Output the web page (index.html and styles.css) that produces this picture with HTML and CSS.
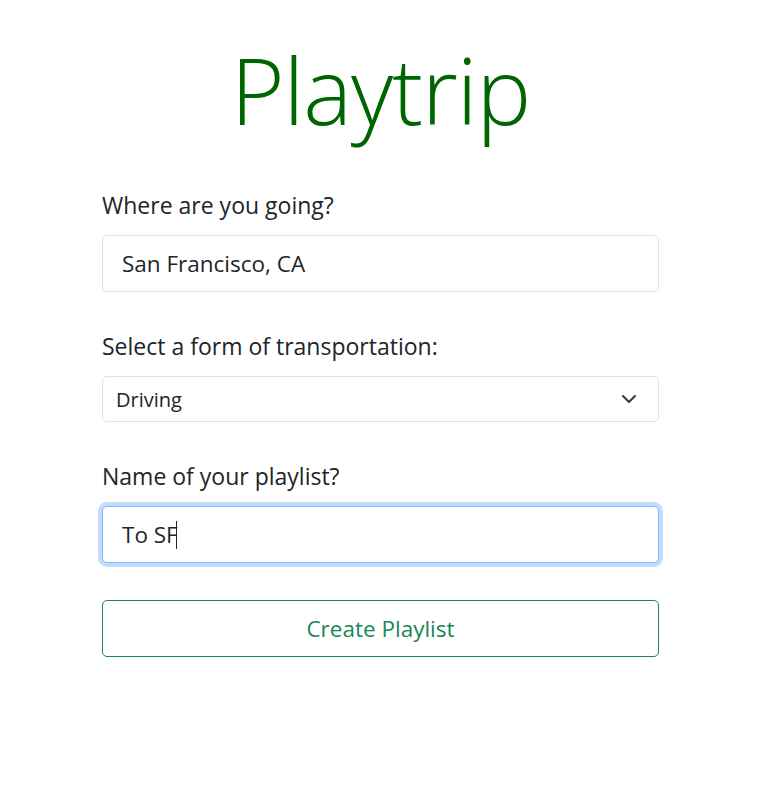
FILE: index.html
```html
<!DOCTYPE html>
<html lang="en">
<head>
<meta charset="utf-8">
<title>Playtrip</title>
<link rel="stylesheet" href="styles.css">
</head>
<body>
<main class="page">
  <h1 class="title">Playtrip</h1>
  <form class="form">
    <div class="field">
      <label class="label" for="dest">Where are you going?</label>
      <input class="input" id="dest" type="text" value="San Francisco, CA">
    </div>
    <div class="field">
      <label class="label" for="mode">Select a form of transportation:</label>
      <div class="select">
        <span class="select-value">Driving</span>
        <svg class="chevron" viewBox="0 0 16 16" width="16" height="16"><path d="M2 5l6 6 6-6" fill="none" stroke="#343a40" stroke-width="2" stroke-linecap="round" stroke-linejoin="round"/></svg>
      </div>
    </div>
    <div class="field">
      <label class="label" for="name">Name of your playlist?</label>
      <div class="input focus"><span>To SF</span><span class="caret"></span></div>
    </div>
    <button type="button" class="btn">Create Playlist</button>
  </form>
</main>
</body>
</html>
```
FILE: styles.css
```css
* { box-sizing: border-box; }
html, body { margin: 0; padding: 0; background: #fff; }
body {
  font-family: "Open Sans", "Noto Sans", sans-serif;
  color: #212529;
}
.page {
  width: 557px;
  margin: 0 auto;
  display: flex;
  flex-direction: column;
  padding-top: 30px;
}
.title {
  margin: 0;
  text-align: center;
  font-weight: 300;
  font-size: 92px;
  line-height: 120px;
  color: #006400;
  letter-spacing: -1px;
}
.form {
  display: flex;
  flex-direction: column;
  margin-top: 38px;
}
.field {
  display: flex;
  flex-direction: column;
  margin-bottom: 37px;
}
.label {
  font-size: 23px;
  line-height: 34px;
  margin-bottom: 13px;
  color: #212529;
}
.input {
  height: 57px;
  border: 1px solid #dee2e6;
  border-radius: 5px;
  padding: 0 19px;
  font-family: inherit;
  font-size: 22.5px;
  color: #212529;
  outline: none;
  display: flex;
  align-items: center;
  background: #fff;
}
.input.focus {
  border-color: #86b7fe;
  box-shadow: 0 0 0 4px rgba(13, 110, 253, 0.25);
}
.caret {
  display: inline-block;
  width: 1px;
  height: 28px;
  background: #212529;
  margin-left: -2px;
}
.select {
  height: 46px;
  border: 1px solid #dee2e6;
  border-radius: 5px;
  padding: 0 21px 0 13px;
  display: flex;
  align-items: center;
  justify-content: space-between;
  font-size: 20px;
}
.chevron { display: block; }
.btn {
  height: 57px;
  border: 1px solid #198754;
  border-radius: 5px;
  background: #fff;
  color: #198754;
  font-family: inherit;
  font-size: 22.5px;
  margin-top: 0;
}
```
